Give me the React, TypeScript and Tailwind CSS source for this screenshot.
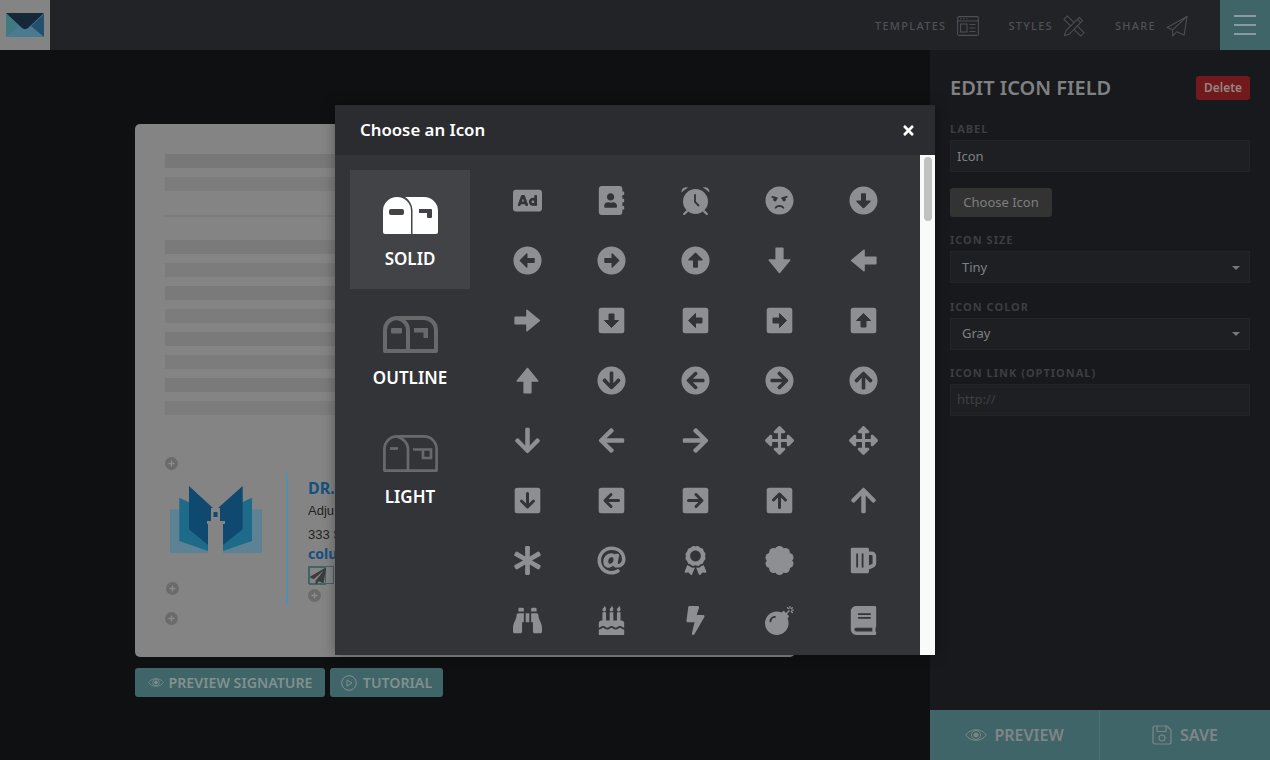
import type { ReactNode } from "react";
import {
  FaAd,
  FaAddressBook,
  FaAngry,
  FaArrowAltCircleDown,
  FaArrowAltCircleLeft,
  FaArrowAltCircleRight,
  FaArrowAltCircleUp,
  FaArrowCircleDown,
  FaArrowCircleLeft,
  FaArrowCircleRight,
  FaArrowCircleUp,
  FaArrowDown,
  FaArrowLeft,
  FaArrowRight,
  FaArrowUp,
  FaArrowsAlt,
  FaAsterisk,
  FaAt,
  FaAward,
  FaBeer,
  FaBinoculars,
  FaBirthdayCake,
  FaBolt,
  FaBomb,
  FaBook,
  FaPaperPlane,
  FaPlus,
  FaTimes,
} from "react-icons/fa";

const MODAL_BG = "#333438";
const turn = { down: 0, left: 90, up: 180, right: 270 };
type Dir = keyof typeof turn;

function AltArrow({ dir }: { dir: Dir }) {
  return (
    <svg viewBox="0 0 29 29" className="h-[29px] w-[29px]">
      <polygon
        transform={`rotate(${turn[dir]} 14.5 14.5)`}
        points="11.2,2.2 17.8,2.2 17.8,14 24.7,14 14.5,26.4 4.3,14 11.2,14"
        fill="currentColor"
        stroke="currentColor"
        strokeWidth="1.6"
        strokeLinejoin="round"
      />
    </svg>
  );
}

function SquareArrow({ dir, thin }: { dir: Dir; thin?: boolean }) {
  return (
    <svg viewBox="0 0 29 29" className="h-[29px] w-[29px]">
      <rect x="1.7" y="1.7" width="25.6" height="25.6" rx="2.5" fill="currentColor" />
      <g transform={`rotate(${turn[dir]} 14.5 14.5)`}>
        {thin ? (
          <path d="M14.5 7.5V20.5M8.5 15L14.5 21L20.5 15" fill="none" stroke={MODAL_BG} strokeWidth="3" strokeLinecap="round" strokeLinejoin="round" />
        ) : (
          <polygon
            points="12,8 17,8 17,14.5 21.5,14.5 14.5,21.5 7.5,14.5 12,14.5"
            fill={MODAL_BG}
            stroke={MODAL_BG}
            strokeWidth="1"
            strokeLinejoin="round"
          />
        )}
      </g>
    </svg>
  );
}

function AlarmClock() {
  return (
    <svg viewBox="0 0 29 29" className="h-[29px] w-[29px]">
      <circle cx="14.5" cy="15.5" r="12.5" fill="currentColor" />
      <path d="M14 9V16L17.5 19.5" fill="none" stroke={MODAL_BG} strokeWidth="1.8" strokeLinecap="round" />
      <path d="M0.6 6.5C0 2.5 4 0 7.5 1.8C5 2.8 2.6 4.4 0.6 6.5Z" fill="currentColor" />
      <path d="M28.4 6.5C29 2.5 25 0 21.5 1.8C24 2.8 26.4 4.4 28.4 6.5Z" fill="currentColor" />
      <path d="M3.2 28L5.8 25.4M25.8 28L23.2 25.4" stroke="currentColor" strokeWidth="2.2" strokeLinecap="round" />
    </svg>
  );
}

// rounded badge, the free icon set only has the spiky one
function ScallopBadge() {
  const lobes = Array.from({ length: 10 }, (_, i) => (i * Math.PI) / 5);
  return (
    <svg viewBox="0 0 29 29" className="h-[29px] w-[29px]" fill="currentColor">
      <circle cx="14.5" cy="14.5" r="10.5" />
      {lobes.map((a) => (
        <circle key={a} cx={14.5 + 10 * Math.sin(a)} cy={14.5 + 10 * Math.cos(a)} r="4.5" />
      ))}
    </svg>
  );
}

const ICONS: ReactNode[] = [
  <FaAd size={29} />,
  <FaAddressBook size={29} />,
  <AlarmClock />,
  <FaAngry size={29} />,
  <FaArrowAltCircleDown size={29} />,
  <FaArrowAltCircleLeft size={29} />,
  <FaArrowAltCircleRight size={29} />,
  <FaArrowAltCircleUp size={29} />,
  <AltArrow dir="down" />,
  <AltArrow dir="left" />,
  <AltArrow dir="right" />,
  <SquareArrow dir="down" />,
  <SquareArrow dir="left" />,
  <SquareArrow dir="right" />,
  <SquareArrow dir="up" />,
  <AltArrow dir="up" />,
  <FaArrowCircleDown size={29} />,
  <FaArrowCircleLeft size={29} />,
  <FaArrowCircleRight size={29} />,
  <FaArrowCircleUp size={29} />,
  <FaArrowDown size={29} />,
  <FaArrowLeft size={29} />,
  <FaArrowRight size={29} />,
  <FaArrowsAlt size={29} />,
  <FaArrowsAlt size={29} />,
  <SquareArrow dir="down" thin />,
  <SquareArrow dir="left" thin />,
  <SquareArrow dir="right" thin />,
  <SquareArrow dir="up" thin />,
  <FaArrowUp size={29} />,
  <FaAsterisk size={29} />,
  <FaAt size={29} />,
  <FaAward size={29} />,
  <ScallopBadge />,
  <FaBeer size={29} />,
  <FaBinoculars size={29} />,
  <FaBirthdayCake size={29} />,
  <FaBolt size={29} />,
  <FaBomb size={29} />,
  <FaBook size={29} />,
];

function MailboxSolid() {
  return (
    <svg viewBox="0 0 55 37" className="h-[37px] w-[55px]" fill="currentColor">
      <path
        fillRule="evenodd"
        d="M0 35V14A14 14 0 0 1 28 14V37H2A2 2 0 0 1 0 35ZM8 12A2 2 0 0 0 6 14V16A2 2 0 0 0 8 18H19A2 2 0 0 0 21 16V14A2 2 0 0 0 19 12Z"
      />
      <path
        fillRule="evenodd"
        d="M29.5 37V14C29.5 8 26.5 3 22 0H41A14 14 0 0 1 55 14V35A2 2 0 0 1 53 37ZM36 12V16H44V20A1 1 0 0 0 45 21H48A1 1 0 0 0 49 20V13A1 1 0 0 0 48 12Z"
      />
    </svg>
  );
}

function MailboxOutline() {
  return (
    <svg viewBox="0 0 55 37" className="h-[37px] w-[55px]" fill="none" stroke="currentColor" strokeWidth="4">
      <path strokeLinejoin="round" d="M2 35V14A12 12 0 0 1 14 2H41A12 12 0 0 1 53 14V35Z" />
      <path d="M25 35V14C25 8 20 3 14 2" />
      <rect x="8" y="12" width="11" height="5.5" rx="1" fill="currentColor" stroke="none" />
      <path d="M31 12H45V22H40.5V16.5H31Z" fill="currentColor" stroke="none" />
    </svg>
  );
}

function MailboxLight() {
  return (
    <svg viewBox="0 0 55 37" className="h-[37px] w-[55px]" fill="none" stroke="currentColor" strokeWidth="2.7">
      <path strokeLinejoin="round" d="M1.4 35.6V14A12.6 12.6 0 0 1 14 1.4H41A12.6 12.6 0 0 1 53.6 14V35.6Z" />
      <path d="M25 36V14C25 8 20 3 14 1.4" />
      <path d="M7 13.5H15" />
      <path d="M30 14.5H48V23H40V14.5" />
    </svg>
  );
}

function TemplatesIcon() {
  return (
    <svg viewBox="0 0 22 20" className="mt-[2px] h-5 w-[22px]" fill="none" stroke="#4c4e52" strokeWidth="1.1">
      <rect x="0.6" y="0.6" width="20.8" height="18.8" rx="1.5" />
      <path d="M0.6 5H21.4M3 2.8H4.5M6 2.8H7.5M9 2.8H10.5" />
      <rect x="3.5" y="8" width="6.5" height="8" />
      <path d="M12.5 8.5H18.5M12.5 12H18.5M12.5 15.5H18.5" />
    </svg>
  );
}

function StylesIcon() {
  return (
    <svg viewBox="0 0 23 23" className="mt-[2px] h-[22px] w-[22px]" fill="none" stroke="#4c4e52" strokeWidth="1.1" strokeLinejoin="round">
      <path d="M1 4.5L4.5 1L22 18.5L18.5 22Z" />
      <path d="M17 2.5L20.5 6L6.5 20L1.5 21.5L3 16.5Z" fill="#212327" />
      <path d="M15 4.5L18.5 8" />
    </svg>
  );
}

function ShareIcon() {
  return (
    <svg viewBox="0 0 23 22" className="mt-[2px] h-[22px] w-[22px]" fill="none" stroke="#4c4e52" strokeWidth="1.1" strokeLinejoin="round">
      <path d="M22 1L1 12.5L7 15L22 1Z" />
      <path d="M22 1L19 20.5L11 17L7 21.5V15" />
    </svg>
  );
}

function EyeIcon({ className }: { className: string }) {
  return (
    <svg viewBox="0 0 22 14" className={className} fill="none" stroke="currentColor" strokeWidth="1">
      <path d="M0.8 7C5 0 17 0 21.2 7C17 14 5 14 0.8 7Z" />
      <circle cx="11" cy="7" r="4.5" />
      <circle cx="11" cy="7" r="2" fill="currentColor" />
    </svg>
  );
}

function Logo() {
  return (
    <svg viewBox="0 0 92 67" className="mt-4 ml-[5px] h-[67px] w-[92px]">
      <path d="M0 23.5H38V67H0ZM53 23.5H92V67H53Z" fill="#5d8294" />
      <path d="M9.3 11.7L38 25V65L9.3 55ZM82 11.7L53 25V65L82 55Z" fill="#1e6b89" />
      <path d="M19 0L42.7 21.7L38 59L19 43.3ZM72.7 0L48.3 21.7L53 59L72.7 43.3Z" fill="#10496f" />
      <path d="M41 22H50V35H55V38H53V67H38V38H37V35H41Z" fill="#848484" />
      <rect x="43.5" y="26" width="4" height="5" fill="#10496f" />
    </svg>
  );
}

function AddDot({ className }: { className: string }) {
  return (
    <div className={`flex h-[13px] w-[13px] items-center justify-center rounded-full bg-[#6b6b6b] text-[#8b8b8b] ${className}`}>
      <FaPlus size={7} />
    </div>
  );
}

function FieldLabel({ children, className }: { children: ReactNode; className: string }) {
  return <div className={`text-[11px] leading-[14px] font-bold tracking-[1px] text-[#3c3e41] ${className}`}>{children}</div>;
}

function SelectBox({ value, className }: { value: string; className: string }) {
  return (
    <div className={`flex h-8 items-center justify-between border border-[#232427] bg-[#1e1f22] pr-[9px] pl-[11px] text-[13px] text-[#7f8084] ${className}`}>
      {value}
      <span className="h-0 w-0 border-x-[4px] border-t-[4px] border-x-transparent border-t-[#77787a]" />
    </div>
  );
}

export default function App() {
  return (
    <div className="relative flex h-[760px] w-[1270px] flex-col overflow-hidden bg-[#0f1012] font-['Noto_Sans',sans-serif]">
      <header className="flex h-[50px] shrink-0 items-center bg-[#212327]">
        <div className="flex h-[50px] w-[50px] items-center justify-center bg-[#848484]">
          <svg viewBox="0 0 38 24" className="h-6 w-[38px]">
            <rect width="38" height="24" rx="1.5" fill="#4a7a90" />
            <path d="M0 1L13 13L0 24Z" fill="#3f7a80" />
            <path d="M38 1L25 13L38 24Z" fill="#24506f" />
            <path d="M0 0H38L22 15C20 16.5 18 16.5 16 15Z" fill="#162838" />
          </svg>
        </div>
        <nav className="ml-auto flex items-center text-[11px] font-medium tracking-[1.3px] text-[#4f5155]">
          <span className="mt-[3px] mr-[11px]">TEMPLATES</span>
          <TemplatesIcon />
          <span className="mt-[3px] mr-[10px] ml-[29px]">STYLES</span>
          <StylesIcon />
          <span className="mt-[3px] mr-[10px] ml-[30px]">SHARE</span>
          <ShareIcon />
        </nav>
        <div className="ml-[32px] flex h-[50px] w-[50px] flex-col items-center justify-center gap-[7px] bg-[#3f6569]">
          <span className="h-[2px] w-[22px] bg-[#8b9a9c]" />
          <span className="h-[2px] w-[22px] bg-[#8b9a9c]" />
          <span className="h-[2px] w-[22px] bg-[#8b9a9c]" />
        </div>
      </header>

      <div className="flex min-h-0 flex-1">
        <main className="w-[930px] pt-[74px] pl-[135px]">
          <section className="h-[533px] w-[660px] rounded-[5px] bg-[#848484] px-[30px] pt-[30px]">
            <div className="h-[14px] bg-[#787878]" />
            <div className="mt-[9px] h-[14px] bg-[#7c7c7c]" />
            <div className="mt-[24px] h-[2px] bg-[#7c7c7c]" />
            <div className="mt-[23px] flex flex-col gap-[9px]">
              <div className="h-[14px] bg-[#7a7a7a]" />
              <div className="h-[14px] bg-[#7c7c7c]" />
              <div className="h-[14px] bg-[#7a7a7a]" />
              <div className="h-[14px] bg-[#7c7c7c]" />
              <div className="h-[14px] bg-[#7a7a7a]" />
              <div className="h-[14px] bg-[#7c7c7c]" />
              <div className="h-[14px] bg-[#7a7a7a]" />
              <div className="h-[14px] bg-[#7c7c7c]" />
            </div>
            <div className="mt-[42px] flex items-start">
              <div className="w-[121px]">
                <AddDot className="" />
                <Logo />
                <AddDot className="mt-[29px] ml-px" />
                <AddDot className="mt-[17px]" />
              </div>
              <div className="mt-[16px] h-[132px] w-[2px] bg-[#5490a8]" />
              <div className="mt-[21px] ml-[20px] font-['Liberation_Sans',sans-serif] text-[13px] leading-[18px] text-[#222]">
                <div className="font-['Noto_Sans',sans-serif] text-[16px] leading-[20px] font-bold text-[#14517f]">DR.</div>
                <div className="mt-[4px]">Adju</div>
                <div className="mt-[6px]">333 S</div>
                <div className="mt-[1px] font-['Noto_Sans',sans-serif] text-[14px] font-bold text-[#14517f]">colu</div>
                <div className="relative mt-[3px] h-[18px] w-[26px] border border-[#3f6569]">
                  <div className="flex h-[18px] w-[17px] items-center justify-center border border-[#3f6569] text-[#3c3c3c]">
                    <FaPaperPlane size={16} className="shrink-0" />
                  </div>
                </div>
                <AddDot className="mt-[5px]" />
              </div>
            </div>
          </section>
          <div className="mt-[11px] flex gap-[5px] text-[14.2px] font-semibold text-[#82908f]">
            <button className="flex h-[29px] w-[190px] items-center justify-center gap-[5px] rounded-[3px] bg-[#3f6569]">
              <EyeIcon className="h-[11px] w-4" />
              PREVIEW SIGNATURE
            </button>
            <button className="flex h-[29px] w-[113px] items-center justify-center gap-[6px] rounded-[3px] bg-[#3f6569]">
              <svg viewBox="0 0 16 16" className="h-4 w-4" fill="none" stroke="currentColor" strokeWidth="1">
                <circle cx="8" cy="8" r="7.3" />
                <path d="M6 4.8L11 8L6 11.2Z" />
              </svg>
              TUTORIAL
            </button>
          </div>
        </main>

        <aside className="flex w-[340px] flex-col bg-[#18191c]">
          <div className="flex-1 px-5 pt-[26px]">
            <div className="flex h-6 items-center justify-between">
              <h2 className="text-[20px] font-semibold text-[#7f8183]">EDIT ICON FIELD</h2>
              <button className="h-6 w-[54px] rounded-[3px] bg-[#711a1b] text-[12px] font-semibold text-[#978585]">Delete</button>
            </div>
            <FieldLabel className="mt-[22px]">LABEL</FieldLabel>
            <div className="mt-[4px] flex h-8 items-center border border-[#232427] bg-[#1e1f22] px-[6px] pt-px text-[13px] text-[#7f8084]">Icon</div>
            <button className="mt-4 h-[29px] w-[102px] rounded-[3px] bg-[#333333] text-[13px] text-[#7e7f80]">Choose Icon</button>
            <FieldLabel className="mt-[16px]">ICON SIZE</FieldLabel>
            <SelectBox value="Tiny" className="mt-[4px] pt-px" />
            <FieldLabel className="mt-[17px]">ICON COLOR</FieldLabel>
            <SelectBox value="Gray" className="mt-[4px]" />
            <FieldLabel className="mt-[16px]">ICON LINK (OPTIONAL)</FieldLabel>
            <div className="mt-[4px] flex h-8 items-center border border-[#232427] bg-[#1e1f22] px-[6px] text-[13px] text-[#3f4043]">http://</div>
          </div>
          <div className="flex h-[50px] bg-[#3f6569] text-[16px] font-semibold text-[#7f8587]">
            <button className="flex w-[170px] items-center justify-center gap-[7px] border-r border-[#4c7074]">
              <EyeIcon className="h-[14px] w-[22px]" />
              PREVIEW
            </button>
            <button className="flex w-[170px] items-center justify-center gap-2">
              <svg viewBox="0 0 20 20" className="h-5 w-5" fill="none" stroke="currentColor" strokeWidth="1.2" strokeLinejoin="round">
                <path d="M1 3A2 2 0 0 1 3 1H15L19 5V17A2 2 0 0 1 17 19H3A2 2 0 0 1 1 17Z" />
                <path d="M5 1V6.5H14V1" />
                <circle cx="10" cy="13" r="3" />
              </svg>
              SAVE
            </button>
          </div>
        </aside>
      </div>

      {/* modal over the dimmed page */}
      <div className="absolute top-[105px] left-[335px] flex h-[550px] w-[600px] flex-col bg-[#333438] shadow-[0_0_12px_rgba(0,0,0,0.35)]">
        <div className="flex h-[50px] shrink-0 items-center justify-between bg-[#2b2c30] pr-[19px] pl-[25px] text-white">
          <h3 className="text-[16.8px] font-semibold">Choose an Icon</h3>
          <FaTimes size={15} />
        </div>
        <div className="flex min-h-0 flex-1">
          <div className="w-[150px] shrink-0 pt-[15px] pl-[15px]">
            <div className="flex h-[119px] w-[120px] flex-col items-center bg-[#424347] pt-[27px] text-white">
              <MailboxSolid />
              <span className="mt-[13px] text-[17px] leading-[24px] font-semibold">SOLID</span>
            </div>
            <div className="flex h-[119px] w-[120px] flex-col items-center pt-[27px] text-[#68696b]">
              <MailboxOutline />
              <span className="mt-[13px] text-[17px] leading-[24px] font-semibold text-white">OUTLINE</span>
            </div>
            <div className="flex h-[119px] w-[120px] flex-col items-center pt-[27px] text-[#68696b]">
              <MailboxLight />
              <span className="mt-[13px] text-[17px] leading-[24px] font-semibold text-white">LIGHT</span>
            </div>
          </div>
          <div className="grid h-fit flex-1 auto-rows-[60px] grid-cols-[repeat(5,84px)] pt-[15px] text-[#8e8f92]">
            {ICONS.map((icon, i) => (
              <div key={i} className="flex items-center justify-center">
                {icon}
              </div>
            ))}
          </div>
          <div className="w-[15px] shrink-0 bg-[#fafafa] px-[4px] pt-[2px]">
            <div className="h-[64px] w-[8px] rounded-[4px] bg-[#c1c1c1]" />
          </div>
        </div>
      </div>
    </div>
  );
}
